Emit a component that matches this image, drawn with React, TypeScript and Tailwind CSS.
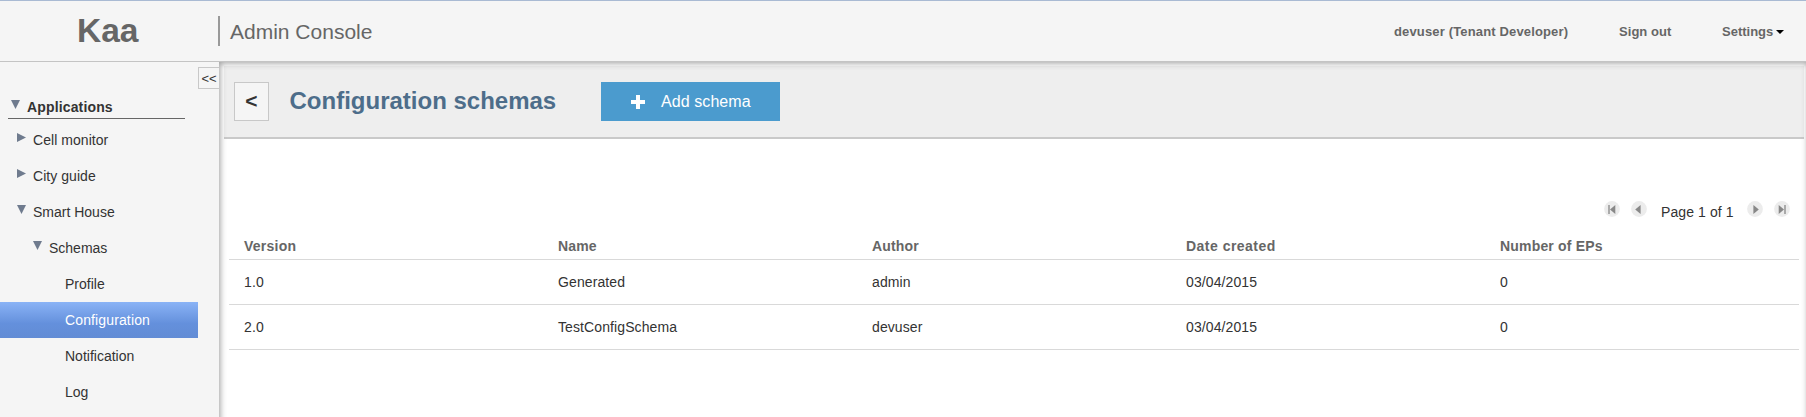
import React from "react";

type TreeItem = {
  label: string;
  arrow?: "open" | "closed";
  indent: string;
  tracking?: string;
  selected?: boolean;
};

const tree: TreeItem[] = [
  { label: "Cell monitor", arrow: "closed", indent: "pl-[17px]", tracking: "tracking-[0.05px]" },
  { label: "City guide", arrow: "closed", indent: "pl-[17px]", tracking: "tracking-[0.05px]" },
  { label: "Smart House", arrow: "open", indent: "pl-[17px]" },
  { label: "Schemas", arrow: "open", indent: "pl-[33px]" },
  { label: "Profile", indent: "pl-[65px]" },
  { label: "Configuration", indent: "pl-[65px]", tracking: "tracking-[0.13px]", selected: true },
  { label: "Notification", indent: "pl-[65px]" },
  { label: "Log", indent: "pl-[65px]" },
];

const columns = [
  { label: "Version", tracking: "tracking-[0.25px]" },
  { label: "Name", tracking: "tracking-[0.15px]" },
  { label: "Author", tracking: "tracking-[0.15px]" },
  { label: "Date created", tracking: "tracking-[0.48px]" },
  { label: "Number of EPs", tracking: "tracking-[0.18px]" },
];

const rows = [
  ["1.0", "Generated", "admin", "03/04/2015", "0"],
  ["2.0", "TestConfigSchema", "devuser", "03/04/2015", "0"],
];

function Arrow({ state }: { state: "open" | "closed" }) {
  return (
    <svg width="9" height="9" viewBox="0 0 9 9" className="shrink-0" fill="#6f7b8e">
      {state === "open" ? <path d="M0 0H9L4.5 9Z" /> : <path d="M0 0L9 4.5L0 9Z" />}
    </svg>
  );
}

function PagerButton({ flip, bar }: { flip?: boolean; bar?: boolean }) {
  return (
    <button className="block size-4">
      <svg width="16" height="16" viewBox="0 0 16 16" className={flip ? "-scale-x-100" : ""}>
        <circle cx="8" cy="8" r="7.9" fill="#ececec" />
        {bar ? (
          <>
            <path d="M4 4H6V13H4Z" fill="#aaa" />
            <path d="M11.3 4V13L6 8.5Z" fill="#888" />
          </>
        ) : (
          <path d="M9.6 4V13L4.2 8.5Z" fill="#888" />
        )}
      </svg>
    </button>
  );
}

function Header() {
  return (
    <header className="flex h-[62px] shrink-0 items-start border-t border-b border-t-[#a9bad3] border-b-[#c4c4c4] bg-[#f5f5f5] text-[#666]">
      <div className="w-[218px] pt-[10px] pl-[77px] text-[33.5px] leading-[40px] font-bold">Kaa</div>
      <div className="mt-[15px] h-[30px] border-l-2 border-[#999] pl-[10px] text-[21px] leading-[24px]">
        <div className="pt-[4px]">Admin Console</div>
      </div>
      <nav className="ml-auto flex pt-[23px] pr-[22px] text-[13px] leading-[16px] font-bold">
        <span className="w-[225px] tracking-[0.15px]">devuser (Tenant Developer)</span>
        <span className="w-[103px] tracking-[0.05px]">Sign out</span>
        <span className="flex w-[62px]">
          Settings
          <svg width="8" height="4" viewBox="0 0 8 4" className="mt-[6px] ml-auto">
            <path d="M0 0H8L4 4Z" fill="#000" />
          </svg>
        </span>
      </nav>
    </header>
  );
}

function Sidebar() {
  return (
    <aside className="flex w-[219px] shrink-0 bg-[#f5f5f5]">
      <div className="w-[198px]">
        <div className="mr-[13px] ml-[8px] flex h-[57px] items-end border-b border-[#666] pb-[3px] pl-[3px]">
          <div className="mb-[6px]">
            <Arrow state="open" />
          </div>
          <span className="ml-[7px] text-[14px] leading-[16px] font-bold tracking-[0.15px]">Applications</span>
        </div>
        <ul className="pt-[3px]">
          {tree.map((item) => (
            <li
              key={item.label}
              className={`flex h-9 items-start gap-[7px] text-[14px] leading-[16px] ${item.indent} ${
                item.tracking ?? ""
              } ${
                item.selected
                  ? "bg-linear-to-b from-[#8ab3f6] via-[#6490dc] via-60% to-[#628cd5] text-white"
                  : ""
              }`}
            >
              {item.arrow && (
                <span className="mt-[11px]">
                  <Arrow state={item.arrow} />
                </span>
              )}
              <span className="mt-[10px]">{item.label}</span>
            </li>
          ))}
        </ul>
      </div>
      <button className="mt-[5px] h-[22px] w-[21px] border border-r-0 border-[#c8c8c8] pt-px text-center text-[13px] leading-[20px]">
        &lt;&lt;
      </button>
    </aside>
  );
}

function Pager() {
  return (
    <div className="flex h-[37px] items-start justify-end pr-[9px]">
      <PagerButton bar />
      <div className="ml-[11px]">
        <PagerButton />
      </div>
      <span className="mt-[3px] ml-[14px] w-[72px] text-[14px] leading-[16px] tracking-[0.1px] whitespace-nowrap">
        Page 1 of 1
      </span>
      <div className="ml-[14px]">
        <PagerButton flip />
      </div>
      <div className="ml-[11px]">
        <PagerButton bar flip />
      </div>
    </div>
  );
}

export default function App() {
  return (
    <div className="flex h-[417px] w-[1806px] flex-col overflow-hidden bg-white font-['Liberation_Sans',Arial,sans-serif] text-[#333]">
      <Header />
      <div className="flex min-h-0 flex-1">
        <Sidebar />
        <main className="relative min-w-0 flex-1 pt-[4px]">
          <div className="mr-[2px] ml-[5px] flex h-[73px] items-start border-b-2 border-[#c9c9c9] bg-[#eee] pt-[16px] pl-[10px]">
            <button className="h-[39px] w-[35px] border border-[#c8c8c8] bg-[#f5f5f5] pb-[2px] text-[21px] leading-[34px] font-bold">
              &lt;
            </button>
            <h1 className="ml-[20.5px] w-[311.5px] pt-[5px] text-[24px] leading-[28px] font-bold text-[#4d6d8a]">
              Configuration schemas
            </h1>
            <button className="flex h-[39px] w-[179px] items-center bg-[#4b9bce] pl-[30px] text-[16px] leading-[18px] text-white">
              <svg width="14" height="14" viewBox="0 0 14 14" className="mr-[16px]">
                <path d="M5 0H9V5H14V9H9V14H5V9H0V5H5Z" fill="#fff" />
              </svg>
              <span className="tracking-[0.08px]">Add schema</span>
            </button>
          </div>
          <div className="mr-[7px] ml-[10px] pt-[62px]">
            <Pager />
            <table className="w-full table-fixed border-collapse text-left text-[14px] leading-[16px]">
              <thead>
                <tr className="h-[19px] border-b border-[#d9d9d9] text-[#666]">
                  {columns.map((c) => (
                    <th key={c.label} className={`p-0 pb-[5px] pl-[15px] align-bottom font-bold ${c.tracking}`}>
                      {c.label}
                    </th>
                  ))}
                </tr>
              </thead>
              <tbody>
                {rows.map((r) => (
                  <tr key={r[0]} className="h-[45px] border-b border-[#d9d9d9]">
                    {r.map((cell, i) => (
                      <td key={i} className="p-0 pl-[15px] align-middle tracking-[0.1px]">
                        {cell}
                      </td>
                    ))}
                  </tr>
                ))}
              </tbody>
            </table>
          </div>
          <div className="pointer-events-none absolute top-0 -right-[3px] -bottom-3 left-0 shadow-[inset_0_0_6px_1px_#999]" />
        </main>
      </div>
    </div>
  );
}
